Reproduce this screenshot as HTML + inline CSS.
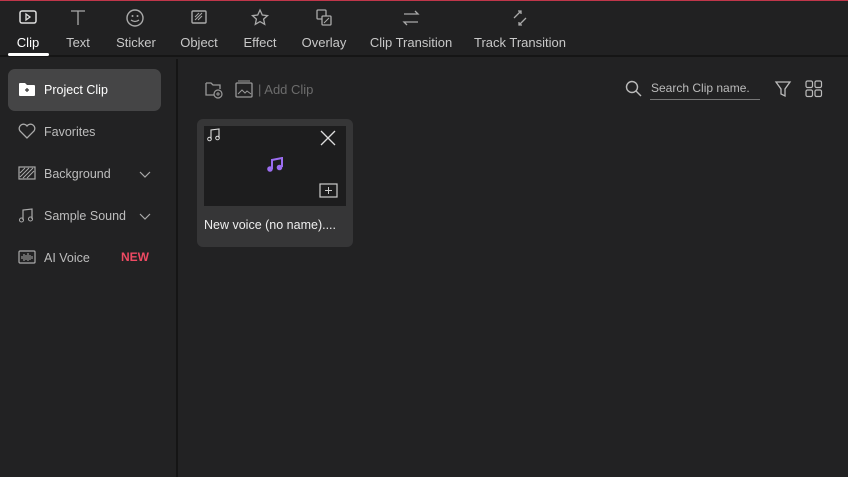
<!DOCTYPE html>
<html><head><meta charset="utf-8"><style>
*{margin:0;padding:0;box-sizing:border-box}
body{width:848px;height:477px;background:#222223;font-family:"Liberation Sans",sans-serif;color:#c8c8c8;position:relative;overflow:hidden;font-size:13px}
.top{position:absolute;left:0;top:0;width:848px;height:1px;background:#c0364a}
.hdr{position:absolute;left:0;top:1px;width:848px;height:56px;background:#212122;border-bottom:2px solid #151515}
.tab{position:absolute;top:34px;font-size:13px;color:#c8c8c8;transform:translateX(-50%);white-space:nowrap}
.ico{position:absolute;top:7px;transform:translateX(-50%)}
.ul{position:absolute;left:8px;top:52px;width:41px;height:3px;border-radius:2px;background:#fff}
.side{position:absolute;left:0;top:59px;width:178px;height:418px;border-right:2px solid #151515}
.item{position:absolute;left:8px;width:153px;height:42px;border-radius:7px;font-size:12.5px;color:#bdbdbd}
.item span.t{position:absolute;left:36px;top:14px}
.item svg{position:absolute;left:10px;top:12px}
.sel{background:#454546;color:#fff}
.item svg.chev{left:131px;top:16px}
</style></head><body>
<div class="top"></div>
<div class="hdr">
<svg class="ico" style="left:28px" width="20" height="18" viewBox="0 0 20 18"><rect x="2" y="3" width="16" height="12" rx="2" fill="none" stroke="#ddd" stroke-width="1.5"/><path d="M8 6v6l4-3z" fill="none" stroke="#ddd" stroke-width="1.3"/></svg>
<svg class="ico" style="left:78px" width="20" height="18" viewBox="0 0 20 18"><path d="M3 3h14M10 3v14" stroke="#aaa" stroke-width="1.3"/></svg>
<svg class="ico" style="left:135px" width="20" height="20" viewBox="0 0 20 20"><circle cx="10" cy="10" r="8" fill="none" stroke="#aaa" stroke-width="1.4"/><circle cx="7.5" cy="8" r="1" fill="#aaa"/><circle cx="12.5" cy="8" r="1" fill="#aaa"/><path d="M6 12q4 3 8 0" stroke="#aaa" fill="none" stroke-width="1.3"/></svg>
<svg class="ico" style="left:199px" width="20" height="18" viewBox="0 0 20 18"><rect x="3" y="3" width="14" height="12" rx="1" fill="none" stroke="#aaa" stroke-width="1.4"/><path d="M6 12l7-7M6 9l4-4M9 12l4-4" stroke="#aaa"/></svg>
<svg class="ico" style="left:260px" width="20" height="20" viewBox="0 0 20 20"><path d="M10 2l2.3 5 5.2.6-3.9 3.5 1.1 5.2L10 13.6 5.3 16.3l1.1-5.2L2.5 7.6 7.7 7z" fill="none" stroke="#aaa" stroke-width="1.3"/></svg>
<svg class="ico" style="left:324px" width="20" height="20" viewBox="0 0 20 20"><rect x="3" y="2" width="9" height="9" rx="1" fill="none" stroke="#aaa" stroke-width="1.3"/><rect x="8" y="8" width="9" height="9" rx="1" fill="#222" stroke="#aaa" stroke-width="1.3"/><path d="M10 15l5-5" stroke="#aaa"/></svg>
<svg class="ico" style="left:411px" width="20" height="20" viewBox="0 0 20 20"><path d="M3 6h14l-3-3M17 14H3l3 3" fill="none" stroke="#aaa" stroke-width="1.3"/></svg>
<svg class="ico" style="left:520px" width="20" height="20" viewBox="0 0 20 20"><path d="M4 10l7-7M8 3h3v3M16 10l-7 7M12 17H9v-3" fill="none" stroke="#aaa" stroke-width="1.3"/></svg>
<div class="tab" style="left:28px;color:#fff">Clip</div>
<div class="tab" style="left:78px">Text</div>
<div class="tab" style="left:136px">Sticker</div>
<div class="tab" style="left:199px">Object</div>
<div class="tab" style="left:260px">Effect</div>
<div class="tab" style="left:324px">Overlay</div>
<div class="tab" style="left:411px">Clip Transition</div>
<div class="tab" style="left:520px">Track Transition</div>
<div class="ul"></div>
</div>
<div class="side">
<div class="item sel" style="top:10px"><svg width="18" height="16"><path d="M1 3q0-1 1-1h5l2 2h7q1 0 1 1v9q0 1-1 1H2q-1 0-1-1z" fill="#fff"/><path d="M9 7v4M7 9h4" stroke="#333" stroke-width="1.2"/></svg><span class="t">Project Clip</span></div>
<div class="item" style="top:52px"><svg width="18" height="16"><path d="M9 15L2 8a4 4 0 0 1 7-5 4 4 0 0 1 7 5z" fill="none" stroke="#aaa" stroke-width="1.3"/></svg><span class="t">Favorites</span></div>
<div class="item" style="top:94px"><svg width="18" height="16"><rect x="1" y="2" width="16" height="12" fill="none" stroke="#aaa" stroke-width="1.2"/><path d="M2 12l9-9M5 13l10-10M9 13l7-7M2 8l5-5" stroke="#aaa"/></svg><span class="t">Background</span><svg class="chev" width="12" height="10"><path d="M1 3l5 5 5-5" fill="none" stroke="#aaa" stroke-width="1.2"/></svg></div>
<div class="item" style="top:136px"><svg width="18" height="16"><path d="M5 13V3l9-1v10" fill="none" stroke="#aaa" stroke-width="1.2"/><circle cx="3.5" cy="13" r="2" fill="none" stroke="#aaa"/><circle cx="12.5" cy="12" r="2" fill="none" stroke="#aaa"/></svg><span class="t">Sample Sound</span><svg class="chev" width="12" height="10"><path d="M1 3l5 5 5-5" fill="none" stroke="#aaa" stroke-width="1.2"/></svg></div>
<div class="item" style="top:178px"><svg width="18" height="16"><rect x="1" y="2" width="16" height="12" rx="1" fill="none" stroke="#aaa" stroke-width="1.2"/><path d="M4 7v3M6 5v7M8 6v5M10 4v8M12 6v5M14 7v3" stroke="#aaa"/></svg><span class="t">AI Voice</span><span style="position:absolute;left:113px;top:13px;color:#ef4a63;font-weight:bold;font-size:12px">NEW</span></div>
</div>
<svg style="position:absolute;left:204px;top:79px" width="20" height="20"><path d="M2 4h5l2 2h7v4M2 4v12h8" fill="none" stroke="#999" stroke-width="1.3"/><circle cx="14" cy="15" r="4" fill="none" stroke="#999" stroke-width="1.2"/><path d="M14 13v4M12 15h4" stroke="#999"/></svg>
<svg style="position:absolute;left:235px;top:79px" width="20" height="20"><rect x="1" y="4" width="16" height="14" rx="1" fill="none" stroke="#999" stroke-width="1.3"/><path d="M3 2h12" stroke="#999"/><path d="M3 15l4-4 3 3 2-2 4 3" fill="none" stroke="#999"/></svg>
<div style="position:absolute;left:258px;top:82px;color:#6c6c6c;font-size:13px">| Add Clip</div>
<svg style="position:absolute;left:625px;top:80px" width="18" height="18"><circle cx="7" cy="7" r="5.5" fill="none" stroke="#bbb" stroke-width="1.4"/><path d="M11 11l5 5" stroke="#bbb" stroke-width="1.4"/></svg>
<div style="position:absolute;left:651px;top:81px;font-size:12px;color:#bbb">Search Clip name.</div>
<div style="position:absolute;left:650px;top:99px;width:110px;height:1px;background:#777"></div>
<svg style="position:absolute;left:774px;top:80px" width="18" height="18"><path d="M2 2h14l-5 7v7l-4-2V9z" fill="none" stroke="#bbb" stroke-width="1.3"/></svg>
<svg style="position:absolute;left:805px;top:80px" width="18" height="18"><rect x="1" y="1" width="6.5" height="6.5" rx="1.5" fill="none" stroke="#bbb" stroke-width="1.2"/><rect x="10" y="1" width="6.5" height="6.5" rx="1.5" fill="none" stroke="#bbb" stroke-width="1.2"/><rect x="1" y="10" width="6.5" height="6.5" rx="1.5" fill="none" stroke="#bbb" stroke-width="1.2"/><rect x="10" y="10" width="6.5" height="6.5" rx="1.5" fill="none" stroke="#bbb" stroke-width="1.2"/></svg>
<div style="position:absolute;left:197px;top:119px;width:156px;height:128px;background:#363637;border-radius:6px">
<div style="position:absolute;left:7px;top:7px;width:142px;height:80px;background:#1d1d1e"></div>
<svg style="position:absolute;left:10px;top:9px" width="14" height="14"><path d="M4 11V2l8-1v9" fill="none" stroke="#ddd" stroke-width="1.1"/><circle cx="2.5" cy="11" r="1.8" fill="none" stroke="#ddd"/><circle cx="10.5" cy="10" r="1.8" fill="none" stroke="#ddd"/></svg>
<svg style="position:absolute;left:123px;top:11px" width="16" height="16"><path d="M1 1l14 14M15 1L1 15" stroke="#ddd" stroke-width="1.3"/></svg>
<svg style="position:absolute;left:70px;top:38px" width="16" height="16"><path d="M5 12V3l10-2v9" fill="none" stroke="#9b6df0" stroke-width="2"/><circle cx="3" cy="12" r="2.8" fill="#9b6df0"/><circle cx="12.5" cy="10.5" r="2.8" fill="#9b6df0"/></svg>
<svg style="position:absolute;left:122px;top:64px" width="19" height="15"><rect x="1" y="1" width="17" height="13" fill="none" stroke="#ccc" stroke-width="1.2"/><path d="M9.5 4v7M6 7.5h7" stroke="#ccc"/></svg>
<div style="position:absolute;left:7px;top:99px;font-size:12.5px;color:#eee;white-space:nowrap">New voice (no name)....</div>
</div>
</body></html>
